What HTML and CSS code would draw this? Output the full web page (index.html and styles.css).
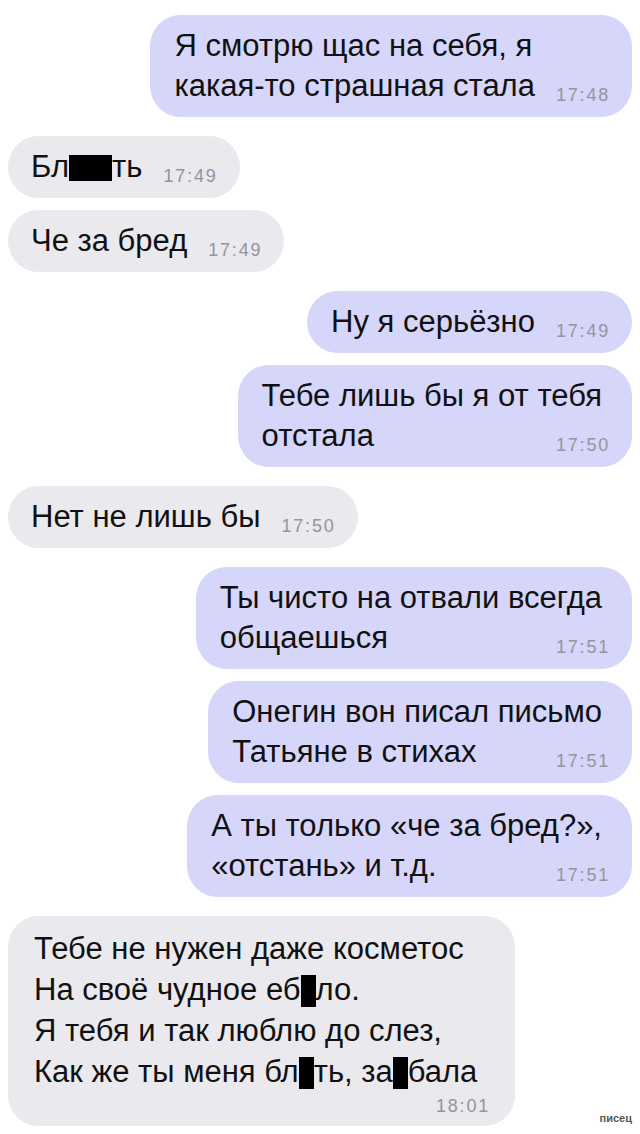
FILE: index.html
```html
<!DOCTYPE html>
<html lang="ru">
<head>
    <meta charset="UTF-8">
    <meta name="viewport" content="width=device-width, initial-scale=1.0">
    <title>Переписка</title>
    <link rel="stylesheet" href="styles.css">
</head>
<body>
    <div class="chat">
        <div class="msg out">
            <p>Я смотрю щас на себя, я<br>какая-то страшная стала<span class="time">17:48</span></p>
        </div>

        <div class="msg in gap">
            <p>Бл<span class="censor wide"></span>ть<span class="time">17:49</span></p>
        </div>
        <div class="msg in">
            <p>Че за бред<span class="time">17:49</span></p>
        </div>

        <div class="msg out gap">
            <p>Ну я серьёзно<span class="time">17:49</span></p>
        </div>
        <div class="msg out">
            <p>Тебе лишь бы я от тебя<br>отстала<span class="time">17:50</span></p>
        </div>

        <div class="msg in gap">
            <p>Нет не лишь бы<span class="time">17:50</span></p>
        </div>

        <div class="msg out gap">
            <p>Ты чисто на отвали всегда<br>общаешься<span class="time">17:51</span></p>
        </div>
        <div class="msg out">
            <p>Онегин вон писал письмо<br>Татьяне в стихах<span class="time">17:51</span></p>
        </div>
        <div class="msg out">
            <p>А ты только «че за бред?»,<br>«отстань» и т.д.<span class="time">17:51</span></p>
        </div>

        <!-- последнее сообщение + подпись в углу -->
        <div class="last-row gap">
            <div class="msg in poem">
                <p>Тебе не нужен даже косметос<br>На своё чудное еб<span class="censor"></span>ло.<br>Я тебя и так люблю до слез,<br>Как же ты меня бл<span class="censor"></span>ть, за<span class="censor"></span>бала</p>
                <span class="time below">18:01</span>
            </div>
            <span class="mark">писец</span>
        </div>
    </div>
</body>
</html>
```

FILE: styles.css
```css
body {
    margin: 0;
    padding: 0;
    background-color: #fff;
    font-family: "Liberation Sans", Arial, sans-serif;
    color: #111;
}

.chat {
    display: flex;
    flex-direction: column;
    gap: 12px;
    padding: 15px 8px 0 8px;
}

.msg {
    border-radius: 31px;
    padding: 11px 22px 11px 23px;
}

.msg p {
    margin: 0;
    font-size: 31px;
    line-height: 40px;
    white-space: nowrap;
    display: flow-root;
}

.msg.out {
    align-self: flex-end;
    background-color: #d6d6fa;
    padding-left: 24px;
}

/* у исходящих текст не доходит до края так близко, как время */
.msg.out p {
    padding-right: 8px;
}

.msg.out .time {
    margin-right: -8px;
}

.msg.in {
    align-self: flex-start;
    background-color: #e9e9ee;
}

.msg.poem {
    width: 456px;
    padding: 12px 25px 10px 26px;
}

.gap {
    margin-top: 7px;
}

.time {
    float: right;
    margin: 19px 0 0 21px;
    font-size: 18px;
    line-height: 20px;
    letter-spacing: 1.8px;
    color: #9494a0;
}

.time.below {
    float: none;
    display: block;
    text-align: right;
    margin: 4px 0 0 0;
}

.censor {
    display: inline-block;
    width: 15px;
    height: 32px;
    background-color: #000;
    vertical-align: -7px;
}

.censor.wide {
    width: 43px;
    height: 26px;
    vertical-align: -4px;
}

.last-row {
    display: flex;
    justify-content: space-between;
    align-items: flex-end;
}

.msg.poem p {
    line-height: 41px;
}

.mark {
    font-size: 11px;
    font-weight: bold;
    color: #555;
    margin-bottom: 2px;
}
```
